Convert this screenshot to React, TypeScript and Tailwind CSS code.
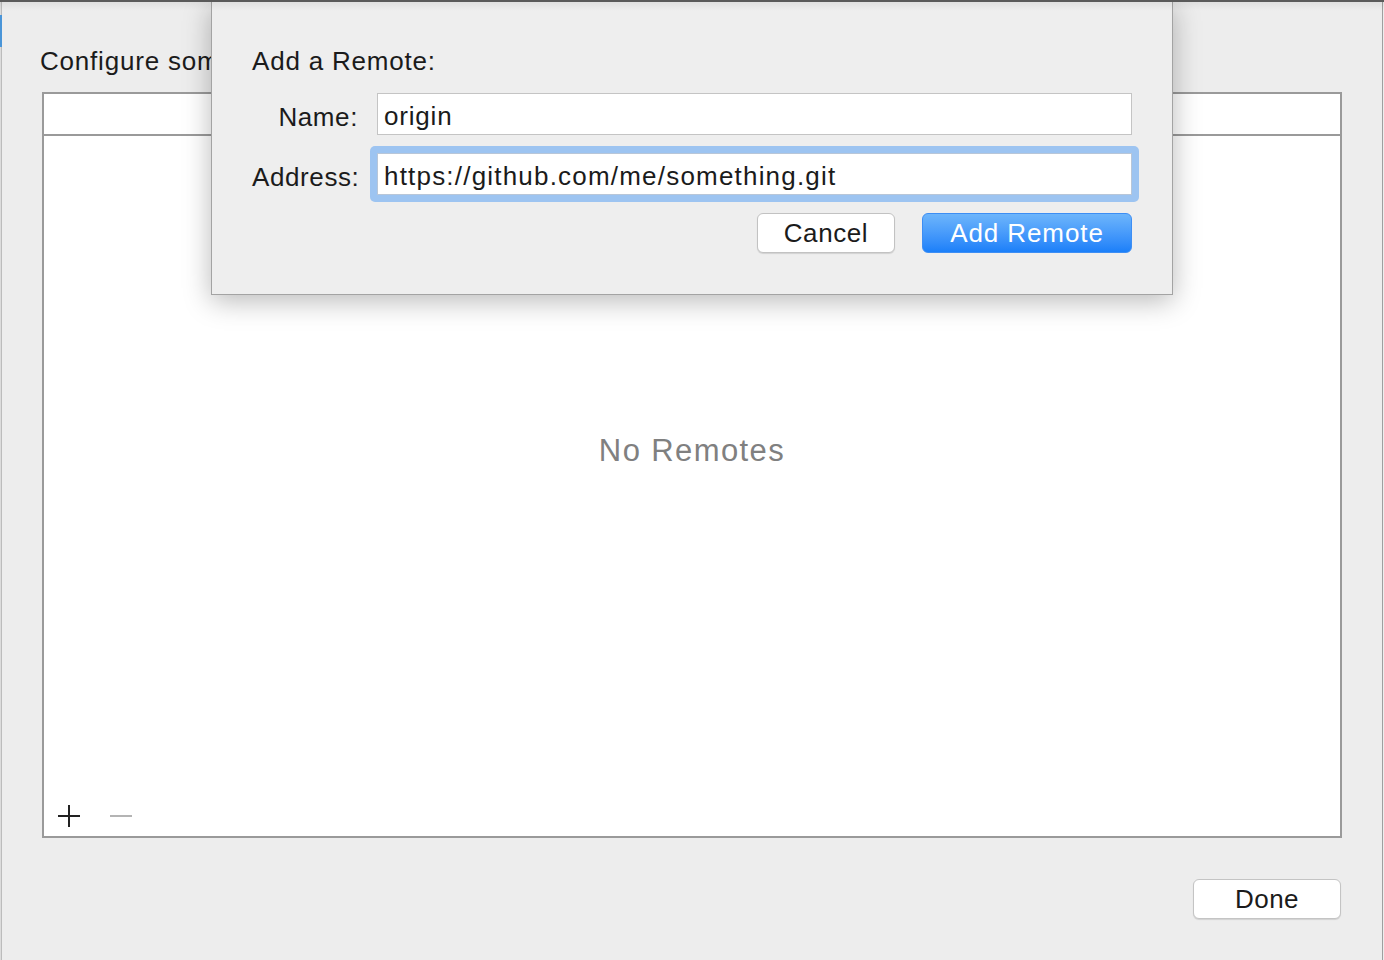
import React from "react";

// 加號 / 減號按鈕
function PlusIcon() {
  return (
    <svg width="22" height="22" viewBox="0 0 22 22">
      <path d="M11 0v22M0 11h22" stroke="#222222" strokeWidth={2} />
    </svg>
  );
}

function MinusIcon() {
  return (
    <svg width="22" height="22" viewBox="0 0 22 22">
      <path d="M0 11h22" stroke="#b4b4b4" strokeWidth={2} />
    </svg>
  );
}

export default function App() {
  return (
    <div className="relative h-[960px] w-[1384px] overflow-hidden border-t-2 border-[#5a5a5a] bg-[#ededed] font-['Liberation_Sans',Arial,sans-serif] text-[26px] leading-[30px] tracking-[0.8px] text-[#1b1b1b] shadow-[inset_1px_0_0_#dcdcdc,inset_2px_0_0_#bcbcbc,inset_-1px_0_0_#ededed,inset_-2px_0_0_#9f9f9f]">
      {/* 視窗左緣的小藍點 */}
      <span className="absolute left-0 top-[13px] h-[32px] w-[2px] bg-[#4a95d8]" />

      {/* 主視窗內容 */}
      <div className="flex flex-col">
        {/* 標題被 sheet 蓋住，只露出前半段 */}
        <div className="ml-[40px] w-[171px] overflow-hidden whitespace-nowrap pt-[44px]">
          Configure some remotes:
        </div>

        <div className="ml-[42px] mt-[16px] flex w-[1300px] flex-col">
          <div className="flex h-[746px] flex-col border-2 border-[#9a9a9a] bg-white">
            <div className="h-[42px] border-b-2 border-[#9a9a9a]" />
            <div className="flex flex-1 flex-col">
              <div className="flex-1 pt-[297px] text-center text-[31px] leading-[36px] tracking-[1.4px] text-[#808080]">
                No Remotes
              </div>
              <div className="flex h-[40px] items-center gap-[30px] pl-[14px]">
                <PlusIcon />
                <MinusIcon />
              </div>
            </div>
          </div>

          <button
            type="button"
            className="mr-[1px] mt-[41px] h-[40px] w-[148px] self-end rounded-[6px] border border-[#c4c4c4] bg-white text-[26px] leading-[30px] tracking-[0.4px] text-[#1b1b1b] shadow-[0_1px_1px_rgba(0,0,0,0.12)]"
          >
            Done
          </button>
        </div>
      </div>

      {/* 頂部的陰影漸層 */}
      <div className="pointer-events-none absolute inset-x-0 top-0 z-20 h-[9px] bg-gradient-to-b from-[rgba(0,0,0,0.06)] to-transparent" />

      {/* 新增 Remote 的 sheet */}
      <div className="absolute left-[211px] top-0 z-10 w-[962px] border-x border-b border-[#a3a3a3] bg-[#eeeeee] px-[40px] pb-[41px] pt-[44px] shadow-[0_6px_26px_rgba(0,0,0,0.28)]">
        <div>Add a Remote:</div>

        <div className="mt-[17px] grid grid-cols-[106px_1fr] items-center gap-x-[19px] gap-y-[18px]">
          <div className="pt-[6px] text-right tracking-[0.6px]">Name:</div>
          <input
            readOnly
            value="origin"
            className="h-[42px] w-full border border-[#c4c4c4] bg-white px-[6px] pt-[5px] text-[26px] tracking-[0.8px] text-[#1b1b1b] outline-none"
          />

          <div className="pt-[6px] text-right tracking-[0.6px]">Address:</div>
          <div className="-m-[7px] rounded-[5px] bg-[#9dc4f1] p-[7px]">
            <input
              readOnly
              value="https://github.com/me/something.git"
              className="block h-[42px] w-full border border-[#b8c6d8] bg-white px-[6px] pt-[5px] text-[26px] tracking-[1.2px] text-[#1b1b1b] outline-none"
            />
          </div>
        </div>

        <div className="mt-[18px] flex justify-end gap-[27px]">
          <button
            type="button"
            className="h-[40px] w-[138px] rounded-[6px] border border-[#c2c2c2] bg-white text-[26px] leading-[30px] tracking-[0.6px] text-[#1b1b1b] shadow-[0_1px_1px_rgba(0,0,0,0.12)]"
          >
            Cancel
          </button>
          <button
            type="button"
            className="h-[40px] w-[210px] rounded-[6px] border border-[#3d8ef4] bg-gradient-to-b from-[#6db5fb] to-[#1a7ff9] text-[26px] leading-[30px] tracking-[0.9px] text-white"
          >
            Add Remote
          </button>
        </div>
      </div>
    </div>
  );
}
